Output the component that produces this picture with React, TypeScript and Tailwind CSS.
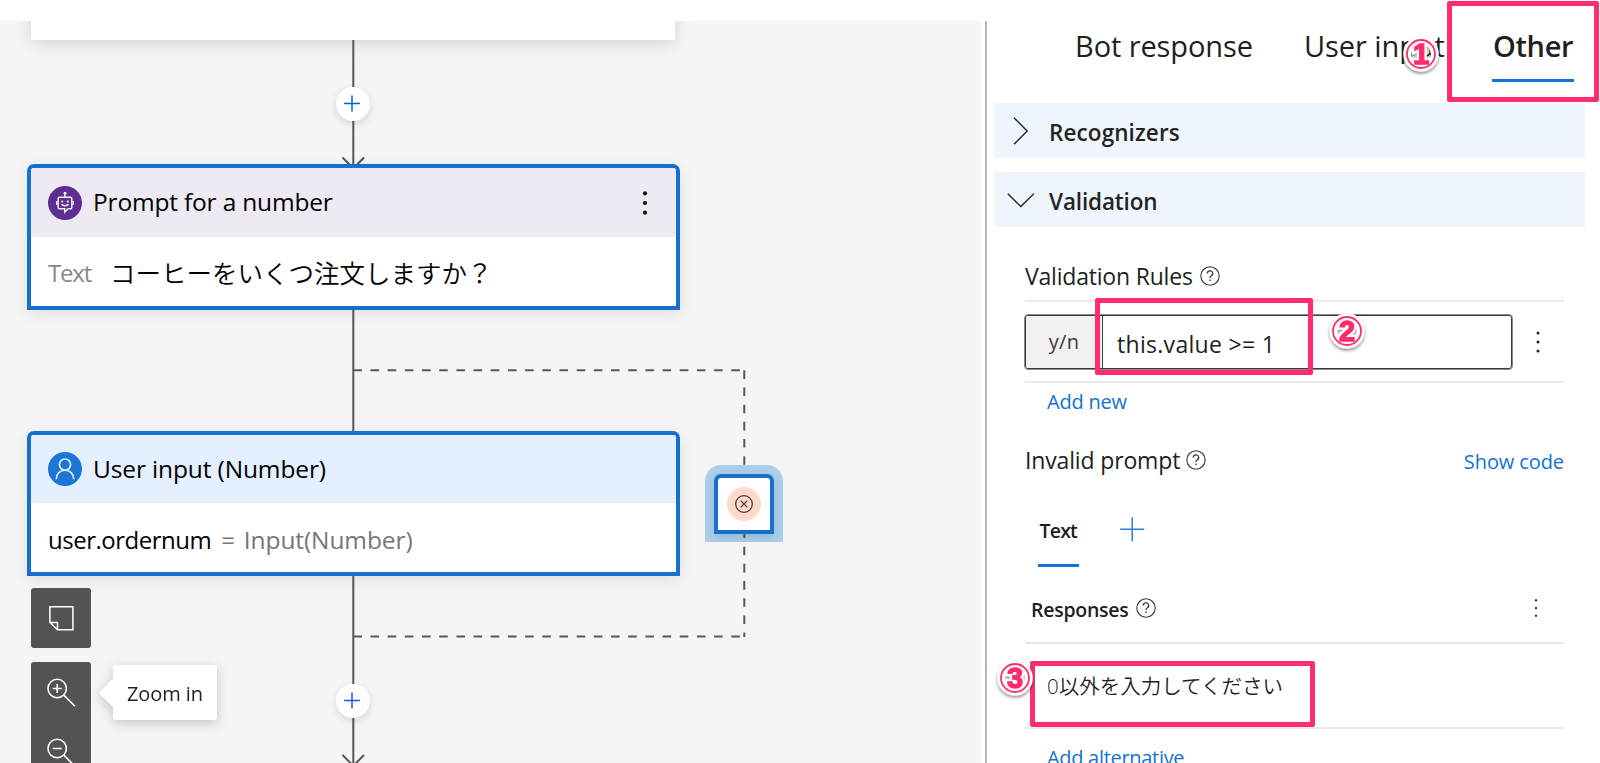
import type { ReactNode } from "react";

function AddNodeButton({ className }: { className: string }) {
  return (
    <button
      type="button"
      aria-label="Add node"
      className={`absolute size-[34px] rounded-full bg-white shadow-[0_3px_9px_rgba(0,0,0,0.13)] ${className}`}
    >
      <svg viewBox="0 0 34 34" className="block size-[34px]" fill="none" stroke="#0b5cf5" strokeWidth="1.5">
        <path d="M8 16.5h16M16 8.5v16" />
      </svg>
    </button>
  );
}

function HelpIcon() {
  return (
    <svg viewBox="0 0 20 20" className="size-5 shrink-0" fill="none" stroke="#3a3938" strokeWidth="1.1">
      <circle cx="10" cy="10" r="9.2" />
      <path d="M7.3 7.6a2.7 2.6 0 1 1 4 2.2c-.9.6-1.3 1-1.3 2.2" strokeWidth="1.3" />
      <circle cx="10" cy="14.2" r="0.5" fill="#3a3938" strokeWidth="0.7" />
    </svg>
  );
}

function Dots({ size, gap, color }: { size: number; gap: number; color: string }) {
  return (
    <svg viewBox="0 0 8 32" className="h-8 w-2" fill={color}>
      <circle cx="4" cy={16 - gap} r={size} />
      <circle cx="4" cy="16" r={size} />
      <circle cx="4" cy={16 + gap} r={size} />
    </svg>
  );
}

function Badge({ digit, className }: { digit: string; className: string }) {
  return (
    <svg
      viewBox="0 0 40 40"
      className={`absolute size-10 drop-shadow-[0_2px_1.5px_rgba(0,0,0,0.4)] ${className}`}
    >
      <circle cx="20" cy="20" r="13.8" fill="none" stroke="#fff" strokeWidth="8" />
      <text
        x="20"
        y="30"
        textAnchor="middle"
        fill="#ff2d6b"
        stroke="#fff"
        strokeWidth="6"
        paintOrder="stroke"
        className="font-['Liberation_Sans',sans-serif] text-[29px] font-bold"
      >
        {digit}
      </text>
      <circle cx="20" cy="20" r="14" fill="none" stroke="#ff2d6b" strokeWidth="1.8" />
      <text
        x="20"
        y="30"
        textAnchor="middle"
        fill="#ff2d6b"
        stroke="#ff2d6b"
        strokeWidth="1.4"
        aria-hidden="true"
        className="font-['Liberation_Sans',sans-serif] text-[29px] font-bold"
      >
        {digit}
      </text>
    </svg>
  );
}

function NodeCard({
  className,
  headerClass,
  icon,
  title,
  menu,
  children,
}: {
  className: string;
  headerClass: string;
  icon: ReactNode;
  title: ReactNode;
  menu?: boolean;
  children: ReactNode;
}) {
  return (
    <div
      className={`absolute left-[27px] flex w-[653px] flex-col overflow-hidden rounded-t-[7px] border-4 border-[#1570cf] bg-white shadow-[0_4px_16px_rgba(0,0,0,0.09)] ${className}`}
    >
      <div className={`flex items-center pl-[17px] pr-[27px] ${headerClass}`}>
        {icon}
        {title}
        {menu && (
          <div className="ml-auto">
            <Dots size={2.1} gap={9.7} color="#111" />
          </div>
        )}
      </div>
      <div className="flex grow items-center pl-[17px] pt-[3px]">{children}</div>
    </div>
  );
}

function Canvas() {
  return (
    <section className="relative h-[742px] w-[981px] shrink-0 overflow-hidden bg-[#f5f5f5]">
      <div className="absolute left-[31px] top-[-60px] h-[79px] w-[644px] bg-white shadow-[0_4px_16px_rgba(0,0,0,0.13)]" />

      <svg viewBox="0 21 981 742" className="absolute left-0 top-0 h-[742px] w-[981px]" fill="none" stroke="#595858" strokeWidth="2">
        <path d="M353.3 40V165M353.3 310V431M353.3 576V763" />
        <path d="M342.5 157.5l10.8 10.8 10.8-10.8M342.5 755l10.8 10.8 10.8-10.8" />
        <path d="M353.3 370.3H744.3" strokeDasharray="8.6 8.58" />
        <path d="M744.3 370.3V473" strokeDasharray="8.6 8.58" />
        <path d="M353.3 636.4H744.3" strokeDasharray="8.6 8.58" />
      </svg>

      <AddNodeButton className="left-[336px] top-[66px]" />
      <AddNodeButton className="left-[336px] top-[663px]" />

      <NodeCard
        className="top-[143px] h-[146px]"
        headerClass="h-[69px] bg-[#eeeaf4]"
        menu
        icon={
          <svg viewBox="0 0 34 34" className="size-[34px] shrink-0" fill="none" stroke="#f3effa" strokeWidth="1.5">
            <circle cx="17" cy="17" r="17" fill="#5c2e91" stroke="none" />
            <path d="M11.5 11.2h11a1.3 1.3 0 0 1 1.3 1.3v9a1.3 1.3 0 0 1-1.3 1.3H20l-3.2 3.4v-3.4h-5.3a1.3 1.3 0 0 1-1.3-1.3v-9a1.3 1.3 0 0 1 1.3-1.3z" />
            <path d="M17 11V8.2M8.8 15v4M25.2 15v4M13.6 18.2c1 2 5.800 2 6.800 0" />
            <circle cx="17" cy="7.300" r="1.500" fill="#f3effa" stroke="none" />
            <circle cx="14.200" cy="15.600" r="1.100" fill="#f3effa" stroke="none" />
            <circle cx="19.800" cy="15.600" r="1.100" fill="#f3effa" stroke="none" />
          </svg>
        }
        title={<span className="ml-[11px] text-[24.5px] tracking-[-0.18px] text-black">Prompt for a number</span>}
      >
        <span className="text-[24px] tracking-[-1.2px] text-[#8a8886]">Text</span>
        <span className="ml-[19px] pb-[2px] font-['Noto_Sans_CJK_JP',sans-serif] text-[25.5px] font-[350] leading-[38px] text-black">
          コーヒーをいくつ注文しますか？
        </span>
      </NodeCard>

      <NodeCard
        className="top-[410px] h-[145px]"
        headerClass="h-[68px] bg-[#e4f0ff]"
        icon={
          <svg viewBox="0 0 34 34" className="size-[34px] shrink-0" fill="none" stroke="#eaf3ff" strokeWidth="1.6">
            <circle cx="17" cy="17" r="17" fill="#1b76d8" stroke="none" />
            <circle cx="17" cy="12.600" r="5.600" />
            <path d="M8.300 27.200c0-5.500 3.700-9 8.700-9s8.700 3.500 8.700 9" />
          </svg>
        }
        title={<span className="ml-[11px] text-[24.5px] tracking-[-0.13px] text-black">User input (Number)</span>}
      >
        <span className="pt-[2px] text-[24px] tracking-[-0.5px] text-black">user.ordernum</span>
        <span className="ml-[10px] pt-[2px] text-[24px] text-[#767676]">=</span>
        <span className="ml-[9px] pt-[2px] text-[24.5px] tracking-[-0.1px] text-[#767676]">Input(Number)</span>
      </NodeCard>

      <div className="absolute left-[705px] top-[444px] h-[77px] w-[78px] rounded-t-[16px] bg-[#abcfeb]" />
      <svg viewBox="734 528 20 110" className="absolute left-[734px] top-[507px] h-[110px] w-5" fill="none" stroke="#595858" strokeWidth="2">
        <path d="M744.3 529.5V637" strokeDasharray="8.6 8.58" />
      </svg>
      <div className="absolute left-[714px] top-[452.500px] flex size-[60px] items-center justify-center rounded-t-[7px] border-4 border-[#1570cf] bg-white shadow-[0_3px_8px_rgba(0,0,0,0.12)]">
        <svg viewBox="0 0 34 34" className="size-[34px]" fill="none" stroke="#3b3331" strokeWidth="1.2">
          <circle cx="17" cy="17" r="17" fill="#fed9cc" stroke="none" />
          <circle cx="17" cy="17" r="8.300" />
          <path d="M13.700 13.700l6.600 6.600M20.300 13.700l-6.600 6.600" />
        </svg>
      </div>

      <button
        type="button"
        aria-label="Fit to page"
        className="absolute left-[31px] top-[567px] size-[60px] rounded-[3px] bg-[#555253]"
      >
        <svg viewBox="0 0 60 60" className="block size-[60px]" fill="none" stroke="#fff" strokeWidth="1.5">
          <path d="M18.900 18.700h23v23H26.500l-7.600-7.500zM18.900 34.500h7.600v7.200" />
        </svg>
      </button>
      <div className="absolute left-[31px] top-[641px] flex w-[60px] flex-col rounded-[3px] bg-[#555253]">
        <svg viewBox="0 0 60 60" className="size-[60px]" fill="none" stroke="#fff" strokeWidth="1.6">
          <circle cx="26.200" cy="26.500" r="9.200" />
          <path d="M32.800 33.100L44 44.300M21.700 26.500h9M26.200 22v9" />
        </svg>
        <svg viewBox="0 0 60 60" className="size-[60px]" fill="none" stroke="#fff" strokeWidth="1.6">
          <circle cx="26.200" cy="26.500" r="9.200" />
          <path d="M32.800 33.100L44 44.300M21.700 26.500h9" />
        </svg>
      </div>

      <div className="absolute left-[99px] top-[644px] flex items-center drop-shadow-[0_3px_6px_rgba(0,0,0,0.2)]">
        <svg viewBox="0 0 14 30" className="h-[30px] w-[14px]" fill="#fff">
          <path d="M0 15L14 0.500V29.500z" />
        </svg>
        <div className="flex h-[55px] w-[104px] items-center rounded-[3px] bg-white pl-[14px] pt-[2px] text-[20px] tracking-[-0.1px] text-[#242322]">
          Zoom in
        </div>
      </div>
    </section>
  );
}

function SectionHeader({ open, children }: { open?: boolean; children: ReactNode }) {
  return (
    <div className="flex h-[55px] items-center bg-[#eef5fd] pl-[13px]">
      <svg viewBox="0 0 28 30" className="h-[30px] w-7" fill="none" stroke="#252423" strokeWidth="1.4">
        {open ? <path d="M0.800 8.800l13 12.800 13-12.800" /> : <path d="M7 1.700l13.200 13.300L7 28.300" />}
      </svg>
      <span className="ml-[14px] pt-[5px] text-[22.5px] font-semibold text-[#252423]">{children}</span>
    </div>
  );
}

function PropertyPanel() {
  return (
    <section className="relative h-[742px] w-[613px] overflow-hidden bg-white">
      <div className="flex h-[82px] pl-[88px] text-[29px] text-[#201f1e]">
        <div className="w-[229px] leading-[50px] tracking-[-0.1px]">Bot response</div>
        <div className="w-[188px] leading-[50px] tracking-[-0.08px]">User input</div>
        <div className="w-[82px] whitespace-nowrap">
          <div className="pl-px font-semibold leading-[50px] tracking-[-0.36px]">Other</div>
          <div className="mt-2 h-[3px] bg-[#1373d6]" />
        </div>
      </div>

      <div className="flex flex-col gap-[14px] pl-[7px] pr-[15px]">
        <SectionHeader>
          <span className="tracking-[0.1px]">Recognizers</span>
        </SectionHeader>
        <SectionHeader open>
          <span className="tracking-[-0.14px]">Validation</span>
        </SectionHeader>
      </div>

      <div className="flex flex-col pl-[38px] pr-9 text-[#201f1e]">
        <div className="mt-[33px] flex h-8 items-center">
          <span className="pt-px text-[23px] tracking-[-0.2px]">Validation Rules</span>
          <span className="ml-[7px]"><HelpIcon /></span>
        </div>
        <div className="mt-[8px] h-0.5 bg-[#ebebeb]" />
        <div className="mt-[13px] flex h-[54px]">
          <div className="flex w-[487px] overflow-hidden rounded-[3px] border-[1.5px] border-[#3b3a39] outline-[0.5px] outline-[#3b3a39]/60">
            <div className="flex w-[77px] items-center justify-center border-r-[1.5px] border-[#3b3a39] bg-[#f2f1ef] text-[20px] tracking-[0.3px] text-[#3b3a39]">
              y/n
            </div>
            <div className="flex items-center pl-[14px] pt-[4px] text-[23px] tracking-[0.3px]">this.value &gt;= 1</div>
          </div>
          <div className="ml-[22px] flex items-center">
            <Dots size={1.5} gap={9} color="#201f1e" />
          </div>
        </div>
        <div className="mt-3 h-0.5 bg-[#ebebeb]" />
        <div className="mt-[4px] pl-[22px] text-[20px] leading-[30px] tracking-[-0.2px] text-[#1272d2]">Add new</div>

        <div className="mt-[27px] flex h-8 items-center">
          <span className="pt-px text-[23px] tracking-[-0.15px]">Invalid prompt</span>
          <span className="ml-[6px]"><HelpIcon /></span>
          <span className="ml-auto pt-1 text-[20px] tracking-[-0.1px] text-[#1272d2]">Show code</span>
        </div>

        <div className="mt-[39px] flex items-start pl-[13px]">
          <div className="w-[41px]">
            <div className="whitespace-nowrap pl-[1.5px] text-[19.5px] font-semibold leading-[31px] tracking-[-0.8px]">Text</div>
            <div className="mt-[18px] h-[3px] bg-[#1373d6]" />
          </div>
          <svg viewBox="0 0 26 26" className="ml-10 mt-px size-[26px]" fill="none" stroke="#2f7fd4" strokeWidth="1.5">
            <path d="M1.200 13.300h24M13.200 1.300v24" />
          </svg>
        </div>

        <div className="mt-[26px] flex h-[30px] items-center pl-[6px]">
          <span className="pt-1 text-[19.5px] font-semibold tracking-[-0.25px]">Responses</span>
          <span className="ml-[7px]"><HelpIcon /></span>
          <span className="ml-auto mr-6"><Dots size={1.2} gap={7.7} color="#3b3a39" /></span>
        </div>
        <div className="mt-[19px] h-0.5 bg-[#e8e7e3]" />
        <div className="h-[83px] pl-[22px] pt-[27px] font-['Open_Sans','Noto_Sans_CJK_JP',sans-serif] text-[20.5px] font-[350] leading-[30px]">
          0以外を入力してください
        </div>
        <div className="h-0.5 bg-[#ebebeb]" />
        <div className="mt-[14px] pl-[22px] text-[20px] leading-[30px] tracking-[-0.3px] text-[#1272d2]">Add alternative</div>
      </div>
    </section>
  );
}

export default function App() {
  return (
    <div className="relative h-[763px] w-[1600px] overflow-hidden bg-white pt-[21px] font-['Open_Sans','Noto_Sans_CJK_JP',sans-serif]">
      <main className="flex">
        <Canvas />
        <div className="ml-[4px] w-[2px] shrink-0 bg-[#b5b4b3]" />
        <PropertyPanel />
      </main>

      <div className="absolute left-[1447px] top-px h-[101px] w-[152px] rounded-[2px] border-[5px] border-[#ff2d6b]" />
      <div className="absolute left-[1095px] top-[298px] h-[77px] w-[218px] rounded-[2px] border-[5px] border-[#ff2d6b]" />
      <div className="absolute left-[1030px] top-[661px] h-[66px] w-[285px] rounded-[2px] border-[5px] border-[#ff2d6b]" />
      <Badge digit="1" className="left-[1401px] top-[34px]" />
      <Badge digit="2" className="left-[1327px] top-[311px]" />
      <Badge digit="3" className="left-[995px] top-[658px]" />
    </div>
  );
}
